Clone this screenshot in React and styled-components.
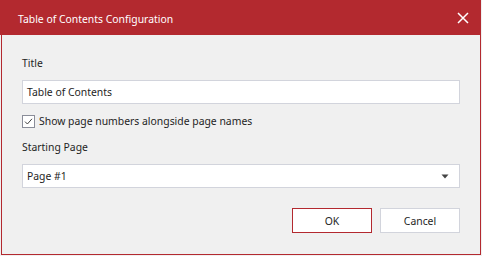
import React from "react";
import styled, { createGlobalStyle } from "styled-components";

const Global = createGlobalStyle`
  html, body { margin: 0; padding: 0; background: #f0f0f0; }
  body { font-family: "Noto Sans", "Open Sans", sans-serif; }
`;

const FS = "10.4px";

const Dialog = styled.div`
  width: 481px;
  height: 255px;
  box-sizing: border-box;
  display: flex;
  flex-direction: column;
  background: #f0f0f0;
`;

const Header = styled.div`
  height: 35px;
  flex: none;
  background: #b3292f;
  display: flex;
  align-items: center;
  justify-content: space-between;
  padding: 0 10px 0 18px;
  color: #fff;
  font-size: ${FS};
`;

const HeaderTitle = styled.span`
  line-height: 16px;
  margin-top: 2px;
`;

const CloseButton = styled.button`
  border: 0;
  background: none;
  padding: 0;
  width: 16px;
  height: 16px;
  display: flex;
  align-items: center;
  justify-content: center;
  cursor: pointer;
`;

const Body = styled.div`
  flex: 1;
  border: 1px solid #b3292f;
  border-top: 0;
  margin-left: 1px;
  padding: 20px 20px 0 20px;
  display: flex;
  flex-direction: column;
  color: #1e1e1e;
  font-size: ${FS};
`;

const Label = styled.div`
  line-height: 16px;
  margin-top: ${(p) => p.$mt || 0}px;
  margin-bottom: 9px;
`;

const Field = styled.div`
  height: 24px;
  box-sizing: border-box;
  background: #fff;
  border: 1px solid #d2d4dc;
  display: flex;
  align-items: center;
  justify-content: space-between;
  padding: 0 10px 0 4px;
  font-size: ${FS};
  color: #1e1e1e;
`;

const CheckRow = styled.label`
  display: flex;
  align-items: center;
  gap: 4px;
  margin-top: 9px;
  height: 16px;
  line-height: 16px;
`;

const Box = styled.span`
  width: 13px;
  height: 13px;
  box-sizing: border-box;
  border: 1px solid #8a8d99;
  background: #fff;
  display: flex;
  align-items: center;
  justify-content: center;
`;

const Buttons = styled.div`
  display: flex;
  justify-content: flex-end;
  gap: 8px;
  margin-top: 20px;
`;

const Button = styled.button`
  width: 80px;
  height: 25px;
  box-sizing: border-box;
  background: #fff;
  border: 1px solid ${(p) => (p.$primary ? "#b3292f" : "#d2d4dc")};
  font-family: inherit;
  font-size: ${FS};
  color: #1e1e1e;
  padding: 0;
  cursor: pointer;
`;

export default function App() {
  return (
    <>
      <Global />
      <Dialog>
        <Header>
          <HeaderTitle>Table of Contents Configuration</HeaderTitle>
          <CloseButton aria-label="Close">
            <svg width="12" height="12" viewBox="0 0 12 12">
              <path d="M1 1L11 11M11 1L1 11" stroke="#fff" strokeWidth="1.5" />
            </svg>
          </CloseButton>
        </Header>
        <Body>
          <Label>Title</Label>
          <Field>Table of Contents</Field>
          <CheckRow>
            <Box>
              <svg width="9" height="9" viewBox="0 0 9 9">
                <path d="M1 4.6L3.4 7L8 1.8" fill="none" stroke="#444" strokeWidth="1" />
              </svg>
            </Box>
            <span>Show page numbers alongside page names</span>
          </CheckRow>
          <Label $mt={10}>Starting Page</Label>
          <Field>
            <span>Page #1</span>
            <svg width="8" height="5" viewBox="0 0 8 5">
              <path d="M0.5 0.5H7.5L4 4.5Z" fill="#444" />
            </svg>
          </Field>
          <Buttons>
            <Button $primary>OK</Button>
            <Button>Cancel</Button>
          </Buttons>
        </Body>
      </Dialog>
    </>
  );
}
